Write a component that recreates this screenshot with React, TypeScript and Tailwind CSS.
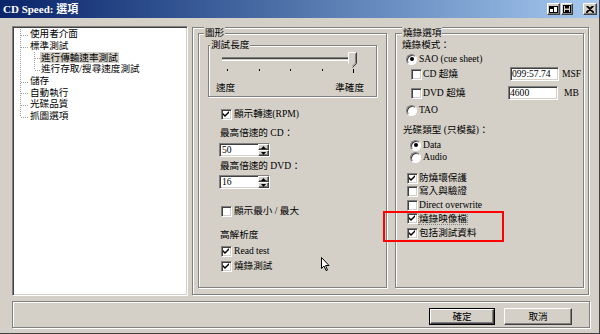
import React from "react";

const sunken =
  "border border-t-[#808080] border-l-[#808080] border-b-white border-r-white shadow-[inset_1px_1px_0_#404040,inset_-1px_-1px_0_#d4d0c8]";
const raised =
  "border border-t-white border-l-white border-b-[#404040] border-r-[#404040] shadow-[inset_-1px_-1px_0_#808080,inset_1px_1px_0_#d4d0c8]";
const etched = "border border-[#808080] shadow-[inset_1px_1px_0_#fff,1px_1px_0_#fff]";

function Check({ on }: { on?: boolean }) {
  return (
    <span className={"inline-flex w-[11px] h-[11px] shrink-0 bg-white items-center justify-center " + sunken}>
      {on && (
        <svg width="7" height="7" viewBox="0 0 7 7">
          <path d="M0 2 L2 4 L6 0 L6 2 L2 6 L0 4 Z" fill="#000" />
        </svg>
      )}
    </span>
  );
}

function Radio({ on }: { on?: boolean }) {
  return (
    <span className="inline-flex w-[11px] h-[11px] shrink-0 rounded-full bg-white border border-t-[#808080] border-l-[#808080] border-b-white border-r-white shadow-[inset_1px_1px_0_#404040] items-center justify-center">
      {on && <span className="w-[4px] h-[4px] rounded-full bg-black" />}
    </span>
  );
}

function Group({
  title,
  className,
  legendClass,
  children,
}: {
  title: string;
  className: string;
  legendClass: string;
  children?: React.ReactNode;
}) {
  return (
    <div className={"relative " + etched + " " + className}>
      <span className={"absolute -top-[7px] bg-[#d4d0c8] px-[1px] leading-[12px] " + legendClass}>{title}</span>
      {children}
    </div>
  );
}

function SpinBtn({ up }: { up?: boolean }) {
  return (
    <div className={"flex-1 flex items-center justify-center bg-[#d4d0c8] " + raised}>
      <svg width="5" height="3" viewBox="0 0 5 3">
        {up ? <path d="M0 3 L2.5 0 L5 3 Z" fill="#000" /> : <path d="M0 0 L5 0 L2.5 3 Z" fill="#000" />}
      </svg>
    </div>
  );
}

function Spin({ v }: { v: string }) {
  return (
    <div className={"flex w-[51px] h-[14px] bg-white " + sunken}>
      <span className="flex-1 pl-[2px] leading-[12px]">{v}</span>
      <div className="w-[11px] flex flex-col">
        <SpinBtn up />
        <SpinBtn />
      </div>
    </div>
  );
}

function Row({ className, children }: { className: string; children: React.ReactNode }) {
  return <div className={"flex items-center leading-[12px] " + className}>{children}</div>;
}

const treeItems: { label: string; child?: boolean; sel?: boolean }[] = [
  { label: "使用者介面" },
  { label: "標準測試" },
  { label: "進行傳輸速率測試", child: true, sel: true },
  { label: "進行存取/搜尋速度測試", child: true },
  { label: "儲存" },
  { label: "自動執行" },
  { label: "光碟品質" },
  { label: "抓圖選項" },
];

export default function App() {
  const rh = 11.7;
  const top = 2;
  const cy = (i: number) => top + rh * i + rh / 2;
  return (
    <div className="relative w-[600px] h-[334px] bg-[#d4d0c8] overflow-hidden flex flex-col border-r border-b border-[#404040] text-[9.6px] text-black font-['Liberation_Serif','Noto_Sans_CJK_TC',serif]">
      {/* Title bar */}
      <div className="h-[18px] shrink-0 flex items-center bg-linear-to-r from-[#0a246a] to-[#a6caf0] pl-[3px] pr-[2px]">
        <span className="text-white font-bold text-[11px] leading-[12px]">CD Speed: 選項</span>
        <div className="ml-auto flex items-center">
          <div className={"w-[13px] h-[12px] bg-[#d4d0c8] flex items-center justify-center " + raised}>
            <svg width="9" height="7" viewBox="0 0 9 7">
              <rect x="0.5" y="0.5" width="4" height="6" fill="#fff" stroke="#000" />
              <rect x="4.5" y="0.5" width="4" height="6" fill="#fff" stroke="#000" />
              <rect x="1" y="1" width="3" height="2" fill="#000" />
            </svg>
          </div>
          <div className={"ml-[1px] w-[12px] h-[12px] bg-[#d4d0c8] flex items-center justify-center " + raised}>
            <svg width="8" height="8" viewBox="0 0 8 8">
              <rect x="0.5" y="0.5" width="7" height="7" fill="none" stroke="#000" />
              <rect x="2" y="1" width="4" height="2.5" fill="#000" />
              <rect x="2" y="5" width="4" height="2" fill="#000" />
            </svg>
          </div>
          <div className={"ml-[10px] w-[14px] h-[12px] bg-[#d4d0c8] flex items-center justify-center " + raised}>
            <svg width="8" height="7" viewBox="0 0 8 7">
              <path d="M0.5 0 L7.5 7 M7.5 0 L0.5 7 M1.5 0 L8 6.5 M6.5 0 L0 6.5" stroke="#000" strokeWidth="1.2" />
            </svg>
          </div>
        </div>
      </div>

      {/* Main area */}
      <div className="flex pl-[12px] pt-[8px]">
        {/* Tree */}
        <div className={"relative w-[176px] h-[270px] bg-white " + sunken}>
          <svg className="absolute left-0 top-0" width="174" height="130">
            <g stroke="#a0a0a0" strokeWidth="1" strokeDasharray="1 1" shapeRendering="crispEdges">
              <line x1="7.5" y1={top} x2="7.5" y2={cy(7)} />
              {[0, 1, 4, 5, 6, 7].map((i) => (
                <line key={i} x1="7.5" y1={Math.round(cy(i)) + 0.5} x2="15" y2={Math.round(cy(i)) + 0.5} />
              ))}
              <line x1="21.5" y1={cy(1) + 5} x2="21.5" y2={cy(3)} />
              {[2, 3].map((i) => (
                <line key={i} x1="21.5" y1={Math.round(cy(i)) + 0.5} x2="28" y2={Math.round(cy(i)) + 0.5} />
              ))}
            </g>
          </svg>
          <div className="relative flex flex-col pt-[1px]">
            {treeItems.map((t) => (
              <div key={t.label} className={"h-[11.7px] flex items-center " + (t.child ? "pl-[27px]" : "pl-[16px]")}>
                <span className={"leading-[11px] px-[1px] " + (t.sel ? "bg-[#d4d0c8]" : "")}>{t.label}</span>
              </div>
            ))}
          </div>
        </div>

        {/* Right frame */}
        <div className={"ml-[4px] mt-[1px] w-[397px] h-[268px] flex pl-[5px] pt-[5px] " + etched}>
          {/* 圖形 */}
          <Group title="圖形" className="w-[189px] h-[255px]" legendClass="left-[5px]">
            <div className="flex flex-col">
              <Group title="測試長度" className="ml-[9px] mt-[11px] w-[169px] h-[52px]" legendClass="left-[1px]">
                <div className="relative ml-[13px] mt-[6px] w-[135px] h-[16px]">
                  <div className="absolute left-0 top-[5px] w-[130px] h-[4px] border-t border-t-[#808080] border-b border-b-white bg-[#404040] shadow-[inset_0_-1px_0_#d4d0c8]" />
                  <svg className="absolute right-0 top-0" width="9" height="16" viewBox="0 0 9 16">
                    <path d="M0.5 0.5 H8.5 V11.5 L4.5 15.5 L0.5 11.5 Z" fill="#d4d0c8" />
                    <path d="M0.5 11.5 V0.5 H8" stroke="#fff" fill="none" />
                    <path d="M8.5 0.5 V11.5 L4.5 15.5" stroke="#404040" fill="none" />
                    <path d="M7.5 1.5 V11 L4.5 14" stroke="#808080" fill="none" />
                  </svg>
                </div>
                <div className="ml-[18px] mt-[1px] w-[127px] h-[4px] flex justify-between items-start">
                  <span className="w-[1px] h-[2px] bg-black" />
                  <span className="w-[1px] h-[2px] bg-black" />
                  <span className="w-[1px] h-[2px] bg-black" />
                  <span className="w-[1px] h-[2px] bg-black" />
                  <span className="w-[1px] h-[4px] bg-black" />
                </div>
                <div className="ml-[7px] mt-[9px] w-[148px] flex justify-between leading-[12px]">
                  <span>速度</span>
                  <span>準確度</span>
                </div>
              </Group>

              <Row className="ml-[22px] mt-[11px] h-[12px] gap-[2px]">
                <Check on />
                <span>顯示轉速(RPM)</span>
              </Row>
              <Row className="ml-[21px] mt-[7px] h-[12px]">
                <span>最高倍速的 CD：</span>
              </Row>
              <div className="ml-[20px] mt-[4px]">
                <Spin v="50" />
              </div>
              <Row className="ml-[21px] mt-[3px] h-[12px]">
                <span>最高倍速的 DVD：</span>
              </Row>
              <div className="ml-[20px] mt-[3px]">
                <Spin v="16" />
              </div>
              <Row className="ml-[22px] mt-[16px] h-[12px] gap-[2px]">
                <Check />
                <span>顯示最小 / 最大</span>
              </Row>
              <Row className="ml-[21px] mt-[12px] h-[12px]">
                <span>高解析度</span>
              </Row>
              <Row className="ml-[22px] mt-[4px] h-[12px] gap-[2px]">
                <Check on />
                <span>Read test</span>
              </Row>
              <Row className="ml-[22px] mt-[3px] h-[12px] gap-[2px]">
                <Check on />
                <span>燒錄測試</span>
              </Row>
            </div>
          </Group>

          {/* 燒錄選項 */}
          <Group title="燒錄選項" className="ml-[8px] w-[189px] h-[255px]" legendClass="left-[6px]">
            <div className="flex flex-col">
              <Row className="ml-[6px] mt-[5px] h-[12px]">
                <span>燒錄模式：</span>
              </Row>
              <Row className="ml-[10px] mt-[2px] h-[12px] gap-[2px]">
                <Radio on />
                <span>SAO (cue sheet)</span>
              </Row>
              <Row className="ml-[15px] mt-[2px] h-[14px]">
                <div className="w-[99px] flex items-center gap-[1px]">
                  <Check />
                  <span>CD 超燒</span>
                </div>
                <div className={"w-[49px] h-[14px] bg-white pl-[1px] leading-[12px] " + sunken}>099:57.74</div>
                <span className="ml-[3px]">MSF</span>
              </Row>
              <Row className="ml-[15px] mt-[5px] h-[14px]">
                <div className="w-[97px] flex items-center gap-[1px]">
                  <Check />
                  <span>DVD 超燒</span>
                </div>
                <div className={"w-[50px] h-[14px] bg-white pl-[1px] leading-[12px] " + sunken}>4600</div>
                <span className="ml-[6px]">MB</span>
              </Row>
              <Row className="ml-[10px] mt-[4px] h-[12px] gap-[2px]">
                <Radio />
                <span>TAO</span>
              </Row>
              <Row className="ml-[7px] mt-[8px] h-[12px]">
                <span>光碟類型 (只模擬)：</span>
              </Row>
              <Row className="ml-[14px] mt-[3px] h-[12px] gap-[2px]">
                <Radio on />
                <span>Data</span>
              </Row>
              <Row className="ml-[14px] h-[12px] gap-[2px]">
                <Radio />
                <span>Audio</span>
              </Row>
              <Row className="ml-[11px] mt-[9px] h-[12px] gap-[1px]">
                <Check on />
                <span>防燒壞保護</span>
              </Row>
              <Row className="ml-[11px] mt-[1px] h-[12px] gap-[1px]">
                <Check />
                <span>寫入與驗證</span>
              </Row>
              <Row className="ml-[11px] mt-[2px] h-[12px] gap-[1px]">
                <Check />
                <span>Direct overwrite</span>
              </Row>
              <Row className="ml-[11px] mt-[1px] h-[12px] gap-[1px]">
                <Check on />
                <span className="outline-1 outline-dotted outline-[#808080] leading-[11px]">燒錄映像檔</span>
              </Row>
              <Row className="ml-[11px] mt-[3px] h-[12px] gap-[1px]">
                <Check on />
                <span>包括測試資料</span>
              </Row>
            </div>
          </Group>
        </div>
      </div>

      {/* Bottom panel */}
      <div className={"ml-[12px] mt-[5px] w-[578px] h-[27px] flex justify-end items-start pt-[6px] pr-[17px] gap-[9px] " + etched}>
        <div className="w-[66px] h-[17px] border border-black">
          <div className={"w-full h-full flex items-center justify-center leading-[12px] " + raised}>確定</div>
        </div>
        <div className={"w-[68px] h-[17px] flex items-center justify-center leading-[12px] " + raised}>取消</div>
      </div>

      {/* Annotation rectangle */}
      <div className="absolute left-[383px] top-[211px] w-[121px] h-[31px] border-2 border-[#ff0000]" />

      {/* Mouse cursor */}
      <svg className="absolute left-[321px] top-[257px]" width="9" height="15" viewBox="0 0 9 15">
        <path d="M0.5 0.5 V11.5 L3 9 L5 13.5 L6.5 13 L4.5 8.5 H8 Z" fill="#fff" stroke="#000" strokeWidth="1" />
      </svg>
    </div>
  );
}
